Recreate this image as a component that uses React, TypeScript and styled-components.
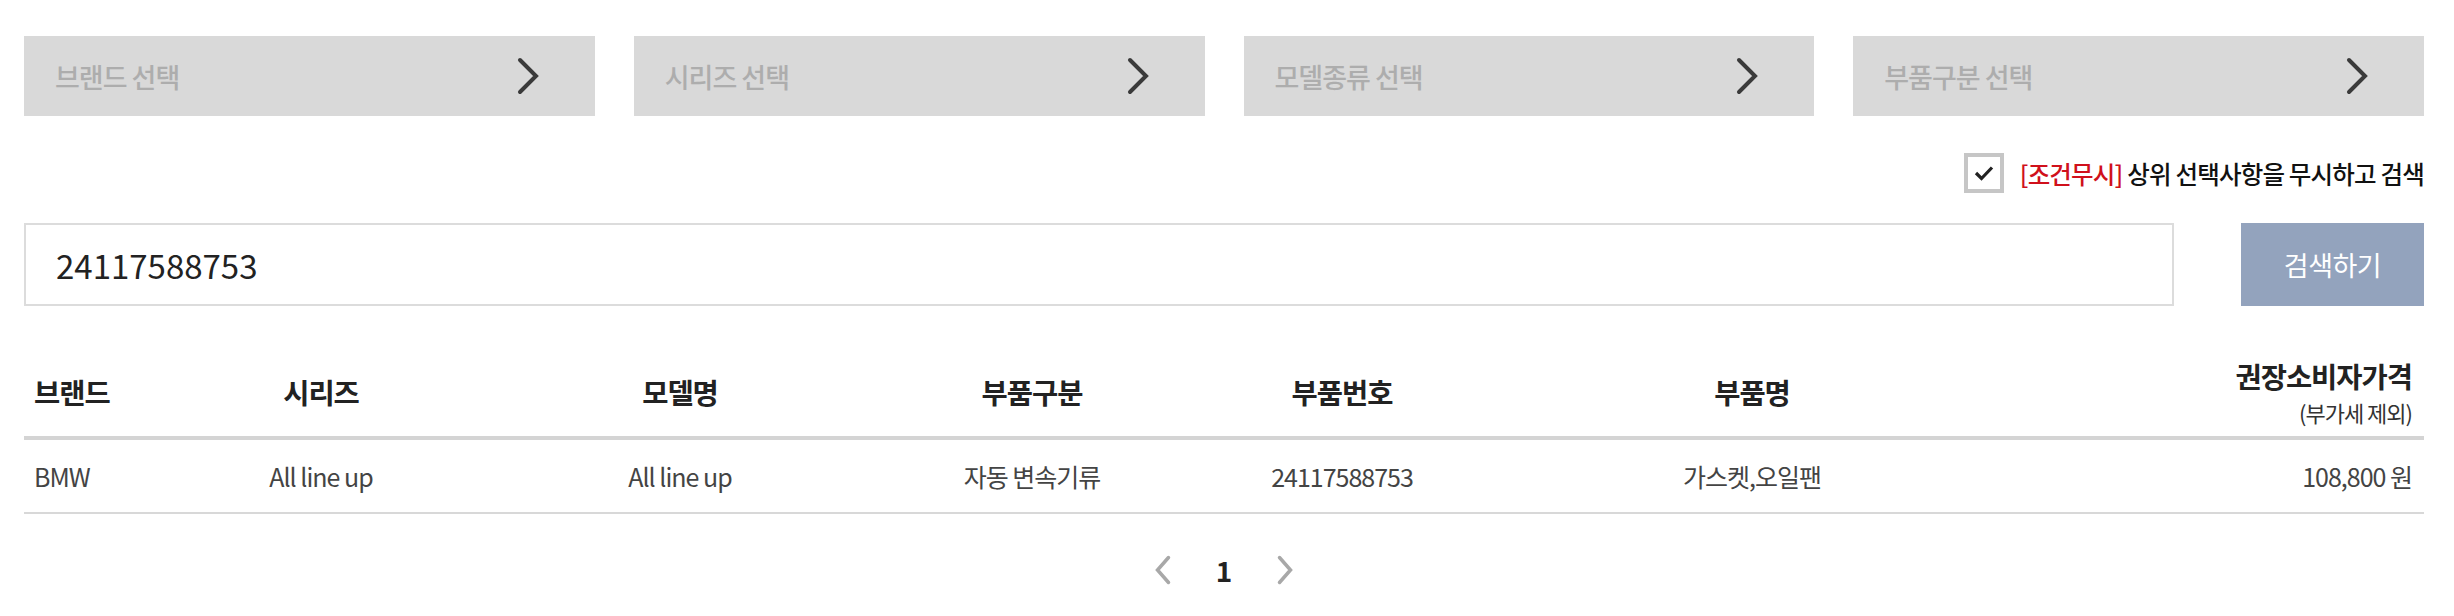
import styled, { createGlobalStyle } from 'styled-components';

const GlobalStyle = createGlobalStyle`
  html, body {
    margin: 0;
    padding: 0;
    background: #fff;
  }
  body {
    font-family: "Noto Sans CJK KR", "Noto Sans", sans-serif;
    color: #222;
  }
`;

const Page = styled.div`
  width: 2400px;
  padding: 36px 30px 40px 24px;
`;

const SelectorRow = styled.div`
  display: grid;
  grid-template-columns: repeat(4, 1fr);
  gap: 39px;
`;

const Selector = styled.button`
  display: flex;
  align-items: center;
  justify-content: space-between;
  height: 80px;
  padding: 0 55px 0 31px;
  border: 0;
  background: #d9d9d9;
  font-family: inherit;
  font-size: 27px;
  font-weight: 500;
  letter-spacing: -1px;
  color: #adadad;
  cursor: pointer;
`;

const OptionRow = styled.label`
  display: flex;
  align-items: center;
  justify-content: flex-end;
  gap: 16px;
  margin-top: 37px;
  font-size: 24.5px;
  font-weight: 500;
  letter-spacing: -0.8px;
  color: #111;
`;

const CheckBox = styled.span`
  display: flex;
  align-items: center;
  justify-content: center;
  width: 32px;
  height: 32px;
  border: 4px solid #c6c6c6;
  background: #fff;
`;

const Red = styled.span`
  color: #d0101b;
`;

const SearchRow = styled.div`
  display: flex;
  gap: 67px;
  margin-top: 30px;
`;

const SearchInput = styled.input`
  flex: 1;
  height: 83px;
  box-sizing: border-box;
  border: 2px solid #dcdcdc;
  padding: 0 30px;
  font-family: inherit;
  font-size: 33px;
  color: #222;
  outline: none;
`;

const SearchButton = styled.button`
  width: 183px;
  height: 83px;
  border: 0;
  background: #93a3bd;
  color: #fff;
  font-family: inherit;
  font-size: 27px;
  letter-spacing: -0.5px;
`;

const Table = styled.table`
  width: 100%;
  margin-top: 40px;
  border-collapse: collapse;
  table-layout: fixed;
`;

const Th = styled.th<{ $align?: 'left' | 'center' | 'right' }>`
  height: 90px;
  padding: 0 12px 0 10px;
  border-bottom: 4px solid #d4d4d4;
  text-align: ${({ $align }) => $align || 'center'};
  font-size: 28.5px;
  font-weight: 700;
  letter-spacing: -1px;
  color: #222;
  vertical-align: middle;
`;

const Sub = styled.span`
  display: block;
  margin-top: 0;
  font-size: 22px;
  font-weight: 400;
  letter-spacing: -1px;
  color: #333;
`;

const Td = styled.td<{ $align?: 'left' | 'center' | 'right' }>`
  height: 72px;
  padding: 0 12px 0 10px;
  border-bottom: 2px solid #d8d8d8;
  text-align: ${({ $align }) => $align || 'center'};
  font-size: 25px;
  letter-spacing: -1px;
  color: #444;
`;

const Pager = styled.nav`
  display: flex;
  align-items: center;
  justify-content: center;
  gap: 44px;
  margin-top: 36px;
  height: 40px;
`;

const PageNum = styled.span`
  font-size: 28px;
  font-weight: 700;
  color: #222;
`;

const Chevron = ({ dir = 'right', color = '#333', w = 22, h = 38, sw = 3 }: {
  dir?: 'left' | 'right';
  color?: string;
  w?: number;
  h?: number;
  sw?: number;
}) => {
  const pts =
    dir === 'right'
      ? `${sw},${sw} ${w - sw},${h / 2} ${sw},${h - sw}`
      : `${w - sw},${sw} ${sw},${h / 2} ${w - sw},${h - sw}`;
  return (
    <svg width={w} height={h} viewBox={`0 0 ${w} ${h}`}>
      <polyline points={pts} fill="none" stroke={color} strokeWidth={sw} strokeLinecap="round" strokeLinejoin="miter" />
    </svg>
  );
};

const selectors = ['브랜드 선택', '시리즈 선택', '모델종류 선택', '부품구분 선택'];

const columns = [130, 336, 382, 322, 298, 522, 410];

export default function App() {
  return (
    <Page>
      <GlobalStyle />
      <SelectorRow>
        {selectors.map((s) => (
          <Selector key={s}>
            {s}
            <Chevron color="#3a3a3a" w={24} h={40} sw={4} />
          </Selector>
        ))}
      </SelectorRow>

      <OptionRow>
        <CheckBox>
          <svg width="20" height="16" viewBox="0 0 20 16">
            <polyline points="2,8 7.5,13.5 18,2.5" fill="none" stroke="#222" strokeWidth="3.2" />
          </svg>
        </CheckBox>
        <span>
          <Red>[조건무시]</Red> 상위 선택사항을 무시하고 검색
        </span>
      </OptionRow>

      <SearchRow>
        <SearchInput defaultValue="24117588753" />
        <SearchButton>검색하기</SearchButton>
      </SearchRow>

      <Table>
        <colgroup>
          {columns.map((w, i) => (
            <col key={i} style={{ width: w }} />
          ))}
        </colgroup>
        <thead>
          <tr>
            <Th $align="left">브랜드</Th>
            <Th>시리즈</Th>
            <Th>모델명</Th>
            <Th>부품구분</Th>
            <Th>부품번호</Th>
            <Th>부품명</Th>
            <Th $align="right">
              권장소비자가격
              <Sub>(부가세 제외)</Sub>
            </Th>
          </tr>
        </thead>
        <tbody>
          <tr>
            <Td $align="left">BMW</Td>
            <Td>All line up</Td>
            <Td>All line up</Td>
            <Td>자동 변속기류</Td>
            <Td>24117588753</Td>
            <Td>가스켓,오일팬</Td>
            <Td $align="right">108,800 원</Td>
          </tr>
        </tbody>
      </Table>

      <Pager>
        <Chevron dir="left" color="#a8a8a8" w={18} h={32} sw={3.5} />
        <PageNum>1</PageNum>
        <Chevron dir="right" color="#a8a8a8" w={18} h={32} sw={3.5} />
      </Pager>
    </Page>
  );
}
